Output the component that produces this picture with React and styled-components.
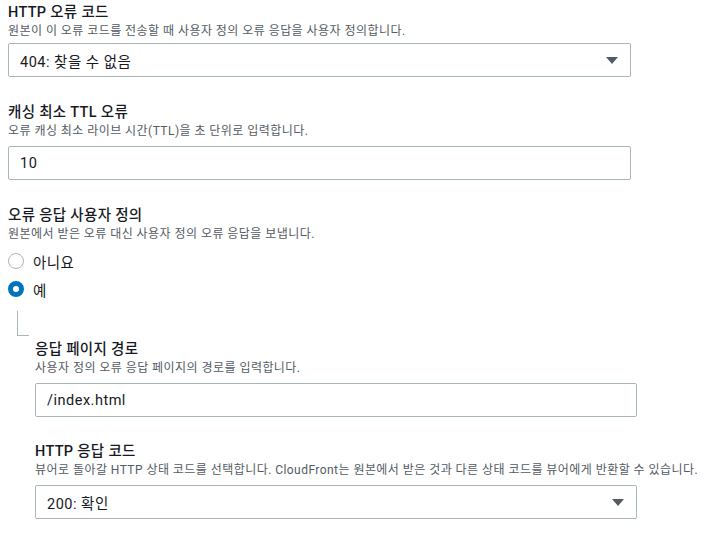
import React, { useState } from 'react';
import styled, { createGlobalStyle } from 'styled-components';

const GlobalStyle = createGlobalStyle`
  body {
    margin: 0;
    background: #fff;
    font-family: Roboto, "Noto Sans CJK KR", sans-serif;
    color: #16191f;
  }
`;

function Field({ label, description, tight, children }) {
  return (
    <FieldWrap>
      <Label>{label}</Label>
      {description && <Description>{description}</Description>}
      <Control tight={tight}>{children}</Control>
    </FieldWrap>
  );
}

function Select({ value }) {
  return (
    <SelectBox>
      <Value>{value}</Value>
      <svg width="12" height="7" viewBox="0 0 12 7">
        <path d="M0 0 H12 L6 7 Z" fill="#545b64" />
      </svg>
    </SelectBox>
  );
}

function Radio({ checked, label, onClick }) {
  return (
    <RadioRow onClick={onClick}>
      <RadioCircle checked={checked} />
      <RadioLabel>{label}</RadioLabel>
    </RadioRow>
  );
}

export default function App() {
  const [custom, setCustom] = useState(true);

  return (
    <Page>
      <GlobalStyle />
      <Section>
        <Field
          tight
          label="HTTP 오류 코드"
          description="원본이 이 오류 코드를 전송할 때 사용자 정의 오류 응답을 사용자 정의합니다."
        >
          <Select value="404: 찾을 수 없음" />
        </Field>

        <Field
          label="캐싱 최소 TTL 오류"
          description="오류 캐싱 최소 라이브 시간(TTL)을 초 단위로 입력합니다."
        >
          <Input defaultValue="10" />
        </Field>

        <Field
          label="오류 응답 사용자 정의"
          description="원본에서 받은 오류 대신 사용자 정의 오류 응답을 보냅니다."
        >
          <RadioGroup>
            <Radio label="아니요" checked={!custom} onClick={() => setCustom(false)} />
            <Radio label="예" checked={custom} onClick={() => setCustom(true)} />
          </RadioGroup>
        </Field>
      </Section>

      {custom && (
        <Nested>
          <Connector />
          <NestedContent>
            <Field
              label="응답 페이지 경로"
              description="사용자 정의 오류 응답 페이지의 경로를 입력합니다."
            >
              <Input defaultValue="/index.html" />
            </Field>
            <Field
              label="HTTP 응답 코드"
              description="뷰어로 돌아갈 HTTP 상태 코드를 선택합니다. CloudFront는 원본에서 받은 것과 다른 상태 코드를 뷰어에게 반환할 수 있습니다."
            >
              <Select value="200: 확인" />
            </Field>
          </NestedContent>
        </Nested>
      )}
    </Page>
  );
}

const Page = styled.div`
  width: 707px;
  padding: 2px 0 0 8px;
  box-sizing: border-box;
`;

const Section = styled.div`
  width: 623px;
  display: flex;
  flex-direction: column;
  gap: 25px;
`;

const FieldWrap = styled.div`
  display: flex;
  flex-direction: column;
`;

const Label = styled.div`
  font-size: 14.5px;
  line-height: 21px;
  font-weight: 500;
  letter-spacing: 0.3px;
  color: #16191f;
`;

const Description = styled.div`
  font-size: 12px;
  line-height: 16px;
  letter-spacing: 0.45px;
  color: #545b64;
  white-space: nowrap;
`;

const Control = styled.div`
  margin-top: ${({ tight }) => (tight ? '4px' : '7px')};
`;

const SelectBox = styled.div`
  height: 34px;
  box-sizing: border-box;
  border: 1px solid #aab7b8;
  border-radius: 2px;
  display: flex;
  align-items: center;
  justify-content: space-between;
  padding: 0 12px 0 11px;
  background: #fff;
`;

const Value = styled.span`
  font-size: 14.5px;
  letter-spacing: 0.5px;
  color: #16191f;
`;

const Input = styled.input`
  width: 100%;
  height: 34px;
  box-sizing: border-box;
  border: 1px solid #aab7b8;
  border-radius: 2px;
  padding: 0 11px;
  font-family: inherit;
  font-size: 14.5px;
  letter-spacing: 0.5px;
  color: #16191f;
  outline: none;
`;

const RadioGroup = styled.div`
  display: flex;
  flex-direction: column;
  gap: 8px;
  margin-top: 2px;
`;

const RadioRow = styled.label`
  display: flex;
  align-items: center;
  gap: 9px;
  height: 20px;
  cursor: pointer;
`;

const RadioCircle = styled.span`
  width: 16px;
  height: 16px;
  box-sizing: border-box;
  border-radius: 50%;
  border: ${({ checked }) => (checked ? '5px solid #0073bb' : '1.5px solid #aab7b8')};
  background: #fff;
  flex-shrink: 0;
`;

const RadioLabel = styled.span`
  font-size: 14.5px;
  letter-spacing: 0.4px;
  color: #16191f;
`;

const Nested = styled.div`
  display: flex;
  align-items: flex-start;
  margin-top: 12px;
`;

const Connector = styled.div`
  width: 12px;
  height: 25px;
  margin-left: 9px;
  border-left: 1px solid #aab7b8;
  border-bottom: 1px solid #aab7b8;
  box-sizing: border-box;
  flex-shrink: 0;
`;

const NestedContent = styled.div`
  width: 602px;
  margin: 28px 0 0 6px;
  display: flex;
  flex-direction: column;
  gap: 24px;
`;
